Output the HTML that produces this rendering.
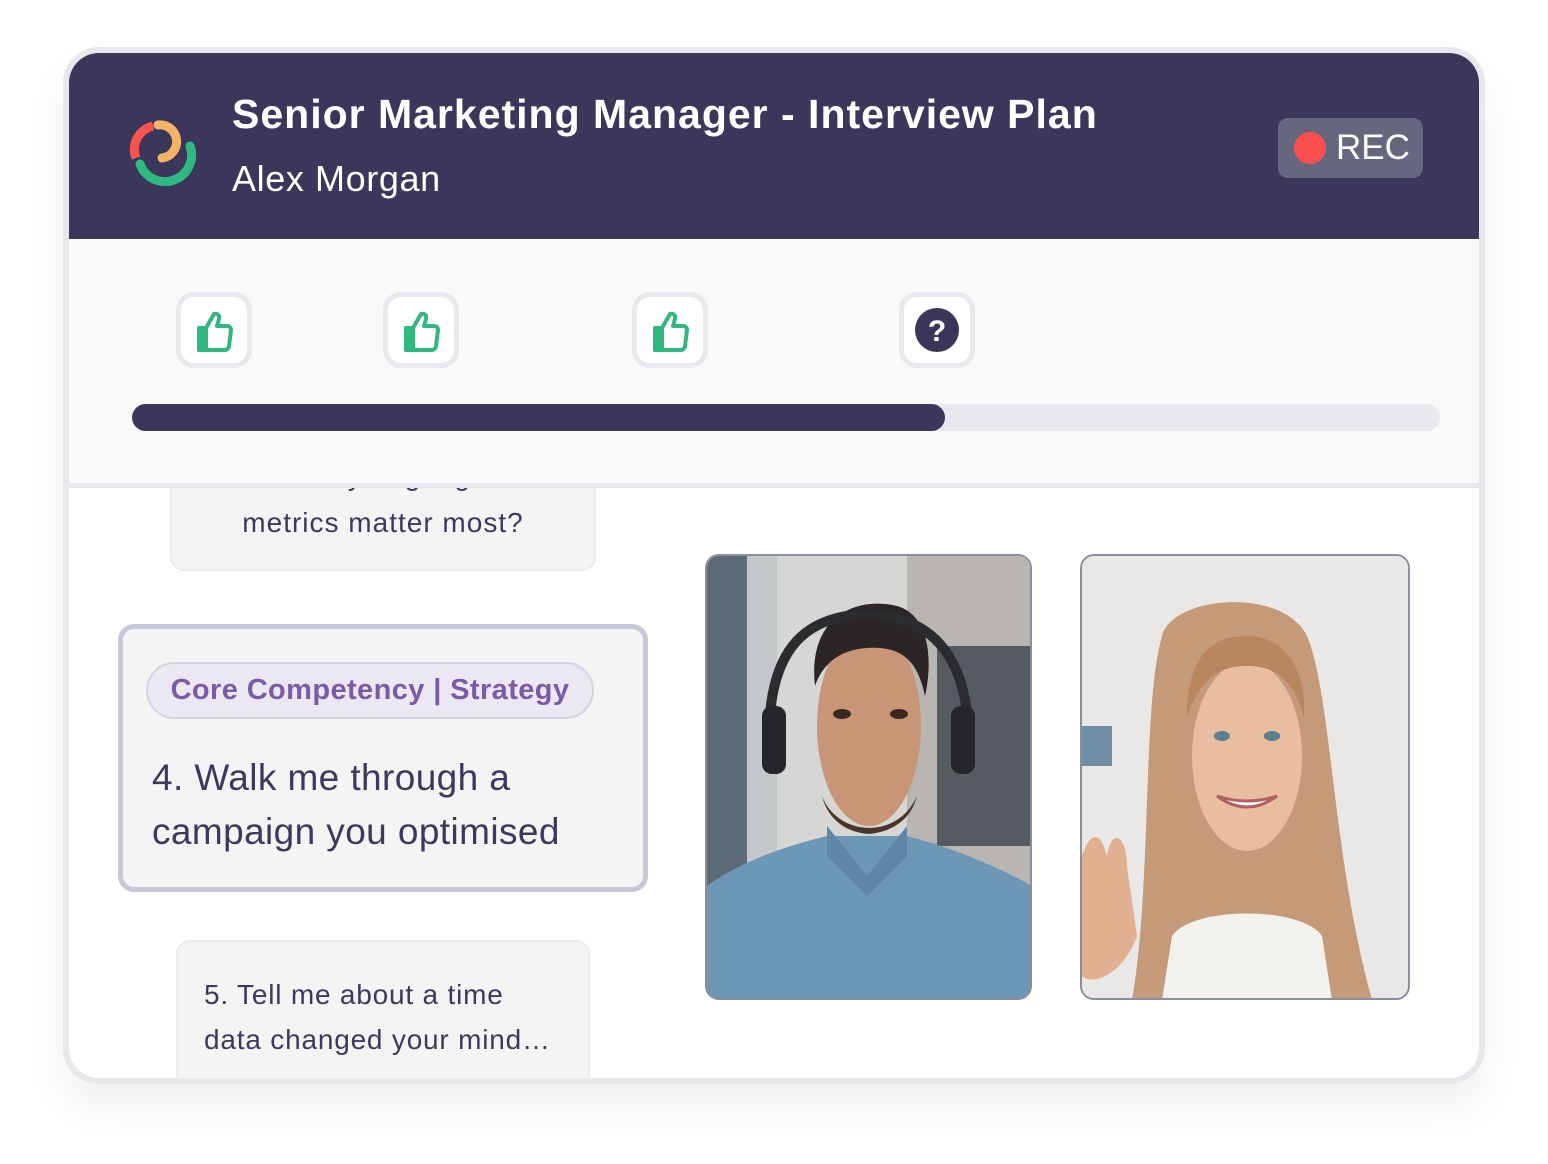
<!DOCTYPE html>
<html><head><meta charset="utf-8"><style>
*{margin:0;padding:0;box-sizing:border-box}
html,body{width:1548px;height:1164px;background:#fff;overflow:hidden;font-family:"Liberation Sans",sans-serif}
.frame{position:absolute;left:63px;top:47px;width:1422px;height:1037px;border-radius:36px;background:#e7e7ec;box-shadow:0 24px 40px rgba(0,0,0,0.06)}
.card{position:absolute;left:69px;top:53px;width:1410px;height:1025px;border-radius:30px;overflow:hidden;background:#fff}
.hdr{position:absolute;left:0;top:0;width:1410px;height:186px;background:#3a375b;z-index:3}
.title{position:absolute;left:163px;top:38px;color:#fff;font-size:41px;font-weight:bold;letter-spacing:1px}
.sub{position:absolute;left:163px;top:105px;color:#fff;font-size:36px;letter-spacing:0.6px}
.rec{position:absolute;left:1209px;top:65px;width:145px;height:60px;border-radius:10px;background:#66667f;color:#fff;font-size:35px}
.rec .dot{position:absolute;left:16px;top:14px;width:32px;height:32px;border-radius:50%;background:#fa5150}
.rec span{position:absolute;left:58px;top:10px}
.top{position:absolute;left:0;top:186px;width:1410px;height:249px;background:#f9f9f9;border-bottom:5px solid #e8e8ee;z-index:2}
.btn{position:absolute;top:53px;width:76px;height:76px;border-radius:18px;background:#fff;border:5px solid #e8e8ee}
.btn svg{position:absolute;left:12px;top:10px}
.bar{position:absolute;left:63px;top:165px;width:1308px;height:27px;border-radius:14px;background:#e8e8ee}
.bar div{width:813px;height:27px;border-radius:14px;background:#3a375b}
.q{position:absolute;background:#f4f4f5;border:2px solid #ebebef;border-radius:14px;color:#3b3a5c}
.q1{left:101px;top:390px;width:426px;height:128px;text-align:center;font-size:28px;letter-spacing:1px;z-index:1}
.q2{left:49px;top:571px;width:530px;height:268px;border:5px solid #c8c9d8;border-radius:16px}
.pill{position:absolute;left:23px;top:33px;width:448px;height:57px;border-radius:29px;background:#ebe7f3;border:2px solid #d6d2e2;color:#7b5aa6;font-weight:bold;font-size:29px;line-height:52px;text-align:center;letter-spacing:0.4px}
.q2 .t{position:absolute;left:29px;top:122px;font-size:37px;line-height:54px;letter-spacing:0.4px}
.q3{left:107px;top:887px;width:414px;height:180px;font-size:28px;line-height:45px;padding:30px 0 0 26px;letter-spacing:0.8px}
.ph{position:absolute;top:501px;height:446px;border-radius:14px;overflow:hidden;border:2px solid #8a8fa0}
</style></head><body>
<div class="frame"></div>
<div class="card">
 <div class="hdr">
  <svg style="position:absolute;left:55px;top:63px" width="75" height="70" viewBox="0 0 75 70">
   <path d="M29 10 A24 24 0 0 0 12 42" fill="none" stroke="#f75450" stroke-width="9"/>
   <path d="M34 9 A15 15 0 0 1 38 42" fill="none" stroke="#f2b466" stroke-width="9" stroke-linecap="round"/>
   <path d="M16 48 A26 26 0 0 0 66 30" fill="none" stroke="#2fb87f" stroke-width="9" stroke-linecap="round"/>
  </svg>
  <div class="title">Senior Marketing Manager - Interview Plan</div>
  <div class="sub">Alex Morgan</div>
  <div class="rec"><div class="dot"></div><span>REC</span></div>
 </div>
 <div class="top">
  <div class="btn" style="left:107px"><svg width="44" height="46" viewBox="0 0 44 46"><path d="M6 21h7v22H6z" fill="#2fb87f"/><path d="M6 21h7v22H6zM13 21l8-14c3-1 6 1 5 5l-2 7h10c3 0 4 2 4 4l-2 16c0 2-2 4-4 4H13" fill="none" stroke="#2fb87f" stroke-width="4" stroke-linejoin="round"/></svg></div>
  <div class="btn" style="left:314px"><svg width="44" height="46" viewBox="0 0 44 46"><path d="M6 21h7v22H6z" fill="#2fb87f"/><path d="M6 21h7v22H6zM13 21l8-14c3-1 6 1 5 5l-2 7h10c3 0 4 2 4 4l-2 16c0 2-2 4-4 4H13" fill="none" stroke="#2fb87f" stroke-width="4" stroke-linejoin="round"/></svg></div>
  <div class="btn" style="left:563px"><svg width="44" height="46" viewBox="0 0 44 46"><path d="M6 21h7v22H6z" fill="#2fb87f"/><path d="M6 21h7v22H6zM13 21l8-14c3-1 6 1 5 5l-2 7h10c3 0 4 2 4 4l-2 16c0 2-2 4-4 4H13" fill="none" stroke="#2fb87f" stroke-width="4" stroke-linejoin="round"/></svg></div>
  <div class="btn" style="left:830px"><svg style="left:11px;top:11px" width="44" height="44" viewBox="0 0 44 44"><circle cx="22" cy="22" r="22" fill="#3a375b"/><text x="22" y="33" text-anchor="middle" fill="#fff" font-size="30" font-weight="bold" font-family="Liberation Sans">?</text></svg></div>
  <div class="bar"><div></div></div>
 </div>
 <div class="q q1"><div style="position:absolute;left:0;right:0;top:15px">How would you gauge which</div><div style="position:absolute;left:0;right:0;top:62px">metrics matter most?</div></div>
 <div class="q q2"><div class="pill">Core Competency | Strategy</div><div class="t">4. Walk me through a<br>campaign you optimised</div></div>
 <div class="q q3">5. Tell me about a time<br>data changed your mind…</div>
 <div class="ph" style="left:636px;width:327px">
  <svg width="325" height="444" viewBox="0 0 325 444">
   <rect width="325" height="444" fill="#a9acae"/>
   <rect x="0" width="40" height="444" fill="#5d6a78"/><rect x="40" width="30" height="444" fill="#c5c8ca"/>
   <rect x="200" y="0" width="125" height="444" fill="#b9b6b2"/><rect x="230" y="90" width="95" height="200" fill="#555b60"/>
   <rect x="70" width="130" height="444" fill="#d6d6d4"/>
   <path d="M0 330 C40 300 100 285 120 280 L200 280 C240 290 290 310 325 330 V444 H0Z" fill="#6c97b6"/>
   <path d="M120 270 L160 320 L200 270 L200 300 L160 340 L120 300Z" fill="#5e87a6"/>
   <ellipse cx="162" cy="170" rx="52" ry="100" fill="#c89676"/>
   <path d="M108 130 C100 60 150 40 190 50 C225 60 225 110 218 140 C210 100 190 90 160 92 C130 94 115 110 108 130Z" fill="#2b2625"/>
   <path d="M115 240 C130 280 190 285 210 240 C205 260 190 275 162 278 C135 276 120 260 115 240Z" fill="#4a3528"/>
   <path d="M62 190 C60 90 100 60 160 58 C225 60 262 100 262 190" fill="none" stroke="#2b2b30" stroke-width="10"/>
   <rect x="55" y="150" width="24" height="68" rx="10" fill="#26262a"/><rect x="244" y="150" width="24" height="68" rx="10" fill="#26262a"/>
   <ellipse cx="135" cy="158" rx="9" ry="5" fill="#3a2720"/><ellipse cx="192" cy="158" rx="9" ry="5" fill="#3a2720"/>
  </svg>
 </div>
 <div class="ph" style="left:1011px;width:330px">
  <svg width="328" height="444" viewBox="0 0 328 444">
   <rect width="328" height="444" fill="#e9e8e6"/>
   <rect x="0" y="170" width="30" height="40" fill="#6f8ea6"/>
   <path d="M80 80 C90 40 200 30 225 80 C250 140 250 300 290 444 H50 C70 330 60 150 80 80Z" fill="#c59a78"/>
   <path d="M90 380 C110 350 220 350 240 380 L250 444 H80Z" fill="#f4f2ef"/>
   <ellipse cx="165" cy="200" rx="55" ry="95" fill="#e9bea0"/>
   <path d="M105 160 C105 100 130 80 165 80 C200 80 225 110 222 160 C210 120 190 110 165 110 C140 110 120 120 105 160Z" fill="#b8875f"/>
   <ellipse cx="140" cy="180" rx="8" ry="5" fill="#5a7f8e"/><ellipse cx="190" cy="180" rx="8" ry="5" fill="#5a7f8e"/>
   <path d="M135 240 Q165 262 195 240 Q165 250 135 240Z" fill="#fff" stroke="#b06060" stroke-width="3"/>
   <path d="M0 300 C10 270 20 280 25 300 C30 270 45 280 45 310 L55 380 C40 420 10 430 0 420Z" fill="#e0b091"/>
  </svg>
 </div>
</div>
</body></html>
